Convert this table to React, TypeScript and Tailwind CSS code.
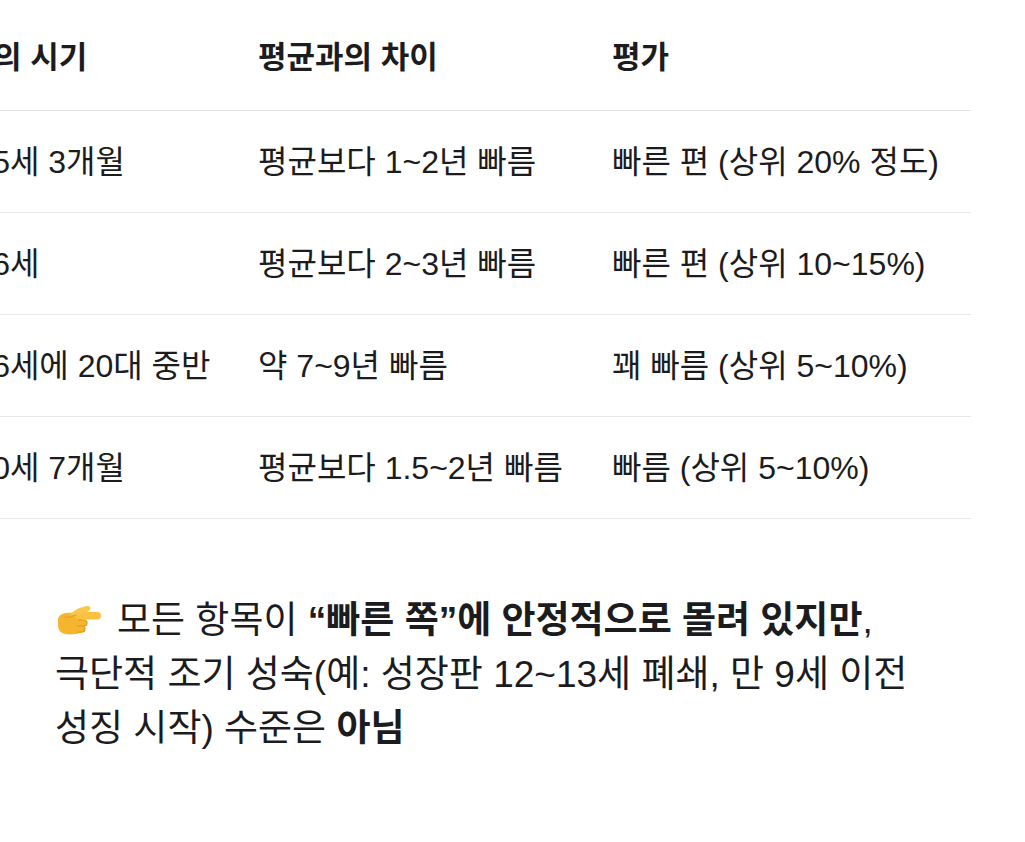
import React from 'react';

const rows = [
  ['만 15세 3개월', '평균보다 1~2년 빠름', '빠른 편 (상위 20% 정도)'],
  ['만 16세', '평균보다 2~3년 빠름', '빠른 편 (상위 10~15%)'],
  ['만 16세에 20대 중반', '약 7~9년 빠름', '꽤 빠름 (상위 5~10%)'],
  ['만 10세 7개월', '평균보다 1.5~2년 빠름', '빠름 (상위 5~10%)'],
];

function PointRight() {
  return (
    <svg width="48" height="32" viewBox="0 0 48 32" className="inline-block align-[-3px] mr-[14px]">
      {/* fist */}
      <path d="M3 16c0-4 3-6 7-7l16-1 3 20c-6 2-13 3-19 2-5-1-7-5-7-9z" fill="#f5b52e" />
      {/* index finger */}
      <rect x="20" y="8" width="26" height="7.5" rx="3.75" fill="#f8c23f" />
      {/* thumb */}
      <path d="M15 11c4-5 10-8 17-9 3 0 4 2 3 4-2 2-6 3-10 5z" fill="#f8c648" />
      {/* curled fingers */}
      <path d="M23 16h6c2 0 3 1.5 3 3s-1 3-3 3h-6M22 22h5c2 0 3 1.5 3 3s-1 3-3 3h-5" fill="#f5b52e" stroke="#e09a22" strokeWidth="1.2" strokeLinejoin="round" />
      <path d="M10 13c3 1 7 0 11-2" stroke="#e3a02a" strokeWidth="1.2" fill="none" strokeLinecap="round" />
    </svg>
  );
}

export default function App() {
  return (
    <div
      className="w-[1025px] h-[842px] overflow-hidden bg-white text-[#1c1c1e]"
      style={{ fontFamily: '"Liberation Sans", "Noto Sans CJK KR", sans-serif' }}
    >
      {/* Table */}
      <div className="ml-[-64px] w-[1035px]">
        <div className="grid grid-cols-[322px_354px_359px] h-[111px] items-center pt-[6px] border-b border-[#e3e3e3] font-semibold text-[31px]">
          <div className="whitespace-nowrap">초경의 시기</div>
          <div className="whitespace-nowrap">평균과의 차이</div>
          <div className="whitespace-nowrap">평가</div>
        </div>
        {rows.map((r, i) => (
          <div
            key={i}
            className="grid grid-cols-[322px_354px_359px] h-[102px] items-center border-b border-[#e8e8e8] text-[32px]"
          >
            <div className="whitespace-nowrap">{r[0]}</div>
            <div className="whitespace-nowrap">{r[1]}</div>
            <div className="whitespace-nowrap">{r[2]}</div>
          </div>
        ))}
      </div>

      {/* Summary */}
      <p className="mt-[75px] ml-[55px] mr-[40px] text-[37px] leading-[54px] whitespace-nowrap">
        <PointRight />
        모든 항목이 <b className="font-bold">“빠른 쪽”에 안정적으로 몰려 있지만</b>,
        <br />
        극단적 조기 성숙(예: 성장판 12~13세 폐쇄, 만 9세 이전
        <br />
        성징 시작) 수준은 <b className="font-bold">아님</b>
      </p>
    </div>
  );
}
